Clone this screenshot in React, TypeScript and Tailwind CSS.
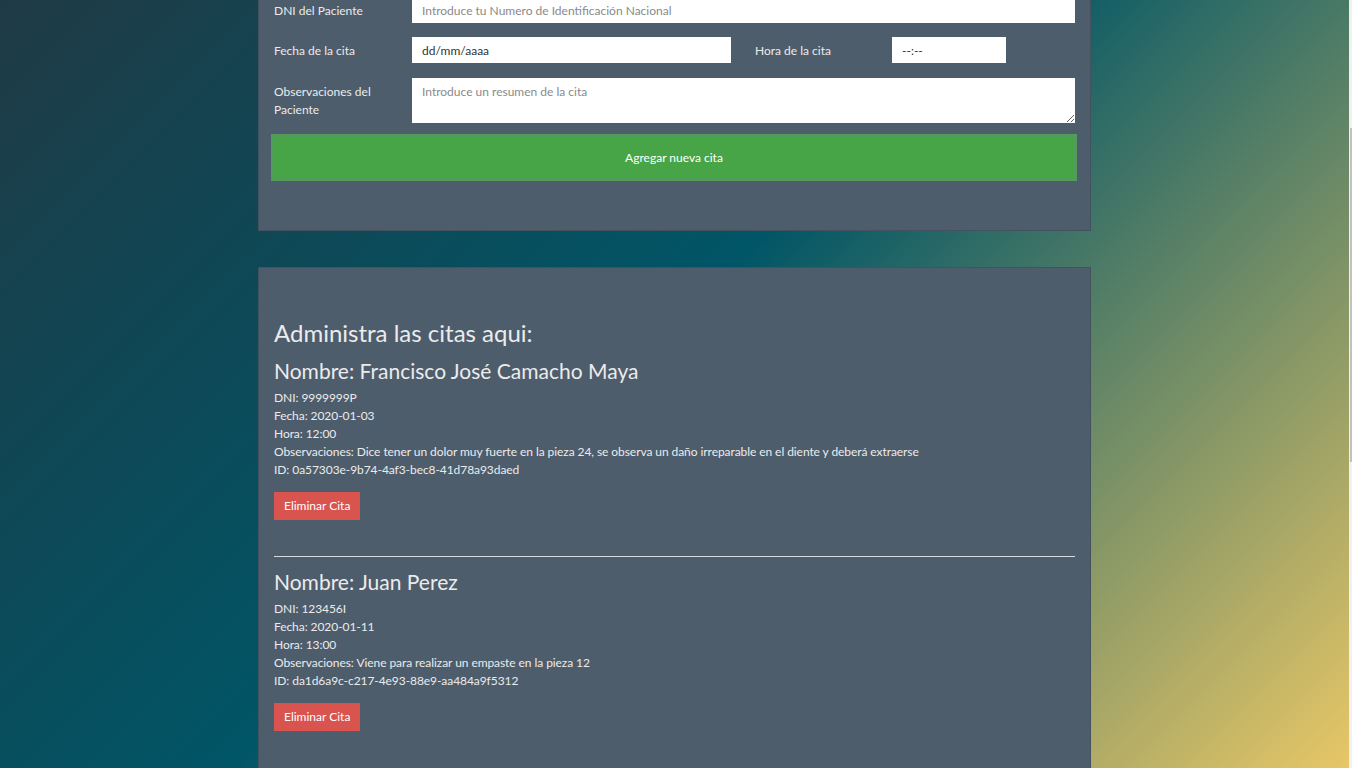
import React from "react";

type Cita = {
  nombre: string;
  dni: string;
  fecha: string;
  hora: string;
  obs: string;
  id: string;
};

const citas: Cita[] = [
  {
    nombre: "Francisco José Camacho Maya",
    dni: "9999999P",
    fecha: "2020-01-03",
    hora: "12:00",
    obs: "Dice tener un dolor muy fuerte en la pieza 24, se observa un daño irreparable en el diente y deberá extraerse",
    id: "0a57303e-9b74-4af3-bec8-41d78a93daed",
  },
  {
    nombre: "Juan Perez",
    dni: "123456I",
    fecha: "2020-01-11",
    hora: "13:00",
    obs: "Viene para realizar un empaste en la pieza 12",
    id: "da1d6a9c-c217-4e93-88e9-aa484a9f5312",
  },
];

const inputCls =
  "h-[26px] bg-white px-[10px] text-[12px] text-[#333] placeholder:text-[#8a8a8a] outline-none";

const labelCls = "w-[138px] pt-[5px] text-[12px] leading-[18px] text-[#ebebeb]";

const CitaItem = ({ cita, last }: { cita: Cita; last: boolean }) => (
  <div>
    <h3 className="text-[21px] leading-[25px] text-[#ebebeb]">Nombre: {cita.nombre}</h3>
    <div className="mt-[6px] text-[12px] leading-[18px] tracking-[-0.07px] text-[#ebebeb]">
      <p>DNI: {cita.dni}</p>
      <p>Fecha: {cita.fecha}</p>
      <p>Hora: {cita.hora}</p>
      <p>Observaciones: {cita.obs}</p>
      <p>ID: {cita.id}</p>
    </div>
    <button className="mt-[13px] h-[28px] bg-[#d9534f] px-[10px] text-[12px] text-white">
      Eliminar Cita
    </button>
    {!last && <hr className="mt-[36px] mb-[12px] border-t border-[#dcdcdc]" />}
  </div>
);

export default function App() {
  return (
    <div className="flex h-[768px] w-[1352px] overflow-hidden font-['Lato','Open_Sans',sans-serif] bg-[linear-gradient(135deg,#1f3a45_0%,#005566_47%,#e8c766_100%)]">
      <div className="flex-1">
        <div className="mx-auto -mt-[59px] w-[833px]">
          {/* formulario */}
          <div className="border border-[#44515e] bg-[#4e5d6c] px-[15px] pt-[15px] pb-[49px]">
            <div className="flex items-start">
              <label className={labelCls}>Nombre del Paciente</label>
              <input className={`${inputCls} flex-1`} placeholder="Introduce el nombre del paciente" />
            </div>
            <div className="mt-[14px] flex items-start">
              <label className={labelCls}>DNI del Paciente</label>
              <input
                className={`${inputCls} flex-1`}
                placeholder="Introduce tu Numero de Identificación Nacional"
              />
            </div>
            <div className="mt-[14px] flex items-start">
              <label className={labelCls}>Fecha de la cita</label>
              <input className={`${inputCls} w-[319px]`} readOnly value="dd/mm/aaaa" />
              <label className="ml-[24px] w-[137px] pt-[5px] text-[12px] leading-[18px] text-[#ebebeb]">
                Hora de la cita
              </label>
              <input className={`${inputCls} w-[114px] px-[9px]`} readOnly value="--:--" />
            </div>
            <div className="mt-[15px] flex items-start">
              <label className={labelCls}>Observaciones del Paciente</label>
              <textarea
                className="h-[45px] flex-1 bg-white px-[10px] py-[5px] text-[12px] text-[#333] placeholder:text-[#8a8a8a] outline-none"
                placeholder="Introduce un resumen de la cita"
              />
            </div>
            <button className="-mx-[3px] mt-[11px] h-[47px] w-[806px] border-[3px] border-[#519c58] bg-[#47a547] text-[12px] text-white">
              Agregar nueva cita
            </button>
          </div>

          {/* listado */}
          <div className="mt-[36px] border border-[#44515e] bg-[#4e5d6c] px-[15px] pt-[50px] pb-[60px]">
            <h2 className="text-[24px] leading-[29px] text-[#ebebeb]">Administra las citas aqui:</h2>
            <div className="mt-[11px]">
              {citas.map((c, i) => (
                <CitaItem key={c.id} cita={c} last={i === citas.length - 1} />
              ))}
            </div>
          </div>
        </div>
      </div>
      <div className="w-[3px] bg-[#f1f1f1]">
        <div className="mt-[128px] ml-[1px] h-[334px] w-[2px] bg-[#c1c1c1]" />
      </div>
    </div>
  );
}
